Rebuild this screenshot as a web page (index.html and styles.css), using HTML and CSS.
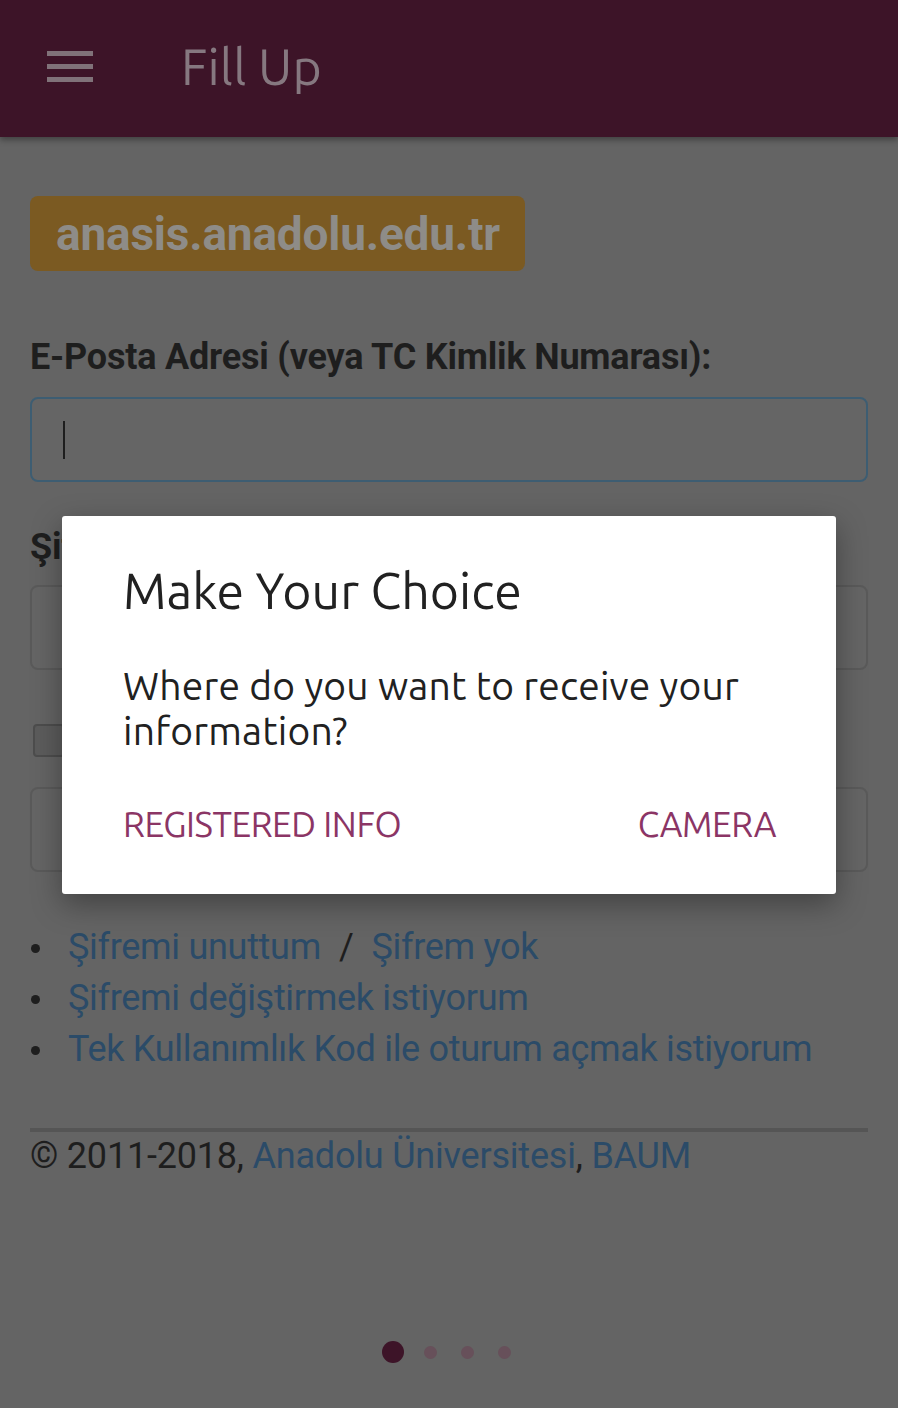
FILE: index.html
```html
<!DOCTYPE html>
<html lang="tr">
<head>
<meta charset="utf-8">
<title>Fill Up</title>
<link rel="stylesheet" href="styles.css">
</head>
<body>
<header class="appbar">
  <svg class="menu" width="46" height="32" viewBox="0 0 46 32"><rect x="0" y="0" width="46" height="5" fill="#807279"/><rect x="0" y="13" width="46" height="5" fill="#807279"/><rect x="0" y="26" width="46" height="5" fill="#807279"/></svg>
  <h1 class="title">Fill Up</h1>
</header>
<main class="page">
  <div class="badge">anasis.anadolu.edu.tr</div>
  <label class="label label-email">E-Posta Adresi (veya TC Kimlik Numarası):</label>
  <div class="input input-focus"><span class="caret"></span></div>
  <label class="label label-pass">Şifre:</label>
  <div class="input input-pass"></div>
  <div class="check-row"><span class="checkbox"></span></div>
  <div class="input input-third"></div>
  <ul class="links">
    <li><a>Şifremi unuttum</a><span class="sep">/</span><a>Şifrem yok</a></li>
    <li><a>Şifremi değiştirmek istiyorum</a></li>
    <li><a>Tek Kullanımlık Kod ile oturum açmak istiyorum</a></li>
  </ul>
  <hr class="rule">
  <p class="footer">© 2011-2018, <a>Anadolu Üniversitesi</a>, <a>BAUM</a></p>
  <div class="dots"><span class="dot active"></span><span class="dot"></span><span class="dot"></span><span class="dot"></span></div>
</main>
<div class="dialog">
  <h2 class="dialog-title">Make Your Choice</h2>
  <p class="dialog-text">Where do you want to receive your information?</p>
  <div class="dialog-actions">
    <button class="action">REGISTERED INFO</button>
    <button class="action">CAMERA</button>
  </div>
</div>
</body>
</html>
```
FILE: styles.css
```css
html, body {
  margin: 0;
  padding: 0;
}
body {
  width: 898px;
  height: 1408px;
  background: #646464;
  overflow: hidden;
  font-family: Roboto, "Liberation Sans", sans-serif;
}
.appbar {
  height: 137px;
  background: #3d1428;
  display: flex;
  align-items: center;
  box-shadow: 0 3px 6px rgba(0,0,0,0.35);
  position: relative;
  z-index: 1;
}
.menu {
  margin-left: 47px;
  margin-top: -4px;
}
.title {
  margin: -6px 0 0 88px;
  font-family: Ubuntu, "Open Sans", sans-serif;
  font-weight: 400;
  font-size: 50px;
  color: #867880;
  letter-spacing: 0.2px;
}
.page {
  padding: 59px 30px 0 30px;
  display: flex;
  flex-direction: column;
  align-items: flex-start;
}
.badge {
  height: 75px;
  width: 495px;
  box-sizing: border-box;
  background: #7b5a22;
  border-radius: 8px;
  color: #8e8c88;
  font-weight: 700;
  font-size: 46px;
  letter-spacing: -0.2px;
  display: flex;
  align-items: center;
  padding-left: 26px;
}
.label {
  font-weight: 700;
  font-size: 36px;
  color: #1e1e1e;
  letter-spacing: -0.2px;
  line-height: 40px;
}
.label-email {
  margin-top: 66px;
}
.label-pass {
  margin-top: 45px;
}
.input {
  width: 838px;
  height: 85px;
  box-sizing: border-box;
  border: 2px solid #5a5a5a;
  border-radius: 8px;
  background: #656565;
}
.input-focus {
  margin-top: 20px;
  border-color: #3d5d72;
  display: flex;
  align-items: center;
  padding-left: 31px;
}
.caret {
  width: 2px;
  height: 38px;
  background: #1e1e1e;
}
.input-pass {
  margin-top: 18px;
}
.check-row {
  margin-top: 54px;
  height: 34px;
  padding-left: 3px;
}
.checkbox {
  display: block;
  width: 32px;
  height: 33px;
  box-sizing: border-box;
  border: 2px solid #4d4d4d;
  border-radius: 4px;
  background: #5c5c5c;
}
.input-third {
  margin-top: 29px;
}
.links {
  margin: 50px 0 0 0;
  padding: 0;
  list-style: none;
  font-size: 36px;
  line-height: 51px;
  color: #1e1e1e;
  letter-spacing: -0.3px;
}
.links li {
  display: flex;
  align-items: center;
}
.links li::before {
  content: "";
  width: 9px;
  height: 9px;
  border-radius: 50%;
  background: #1e1e1e;
  margin: 2px 28px 0 1px;
}
.links a, .footer a {
  color: #2b4b68;
}
.sep {
  margin: 0 18px;
  color: #1e1e1e;
}
.rule {
  width: 838px;
  margin: 53px 0 0 0;
  border: 0;
  height: 4px;
  background: #555555;
}
.footer {
  margin: 2px 0 0 0;
  font-size: 36px;
  line-height: 44px;
  color: #1e1e1e;
  letter-spacing: -0.2px;
}
.dots {
  align-self: center;
  margin: 163px 6px 0 0;
  display: flex;
  align-items: center;
}
.dot {
  width: 13px;
  height: 13px;
  border-radius: 50%;
  background: #67505a;
  margin-left: 24px;
}
.dot.active {
  width: 22px;
  height: 22px;
  background: #3d1428;
  margin-left: 0;
  margin-right: -4px;
}
.dialog {
  position: absolute;
  left: 62px;
  top: 516px;
  width: 774px;
  height: 378px;
  box-sizing: border-box;
  background: #ffffff;
  border-radius: 3px;
  box-shadow: 0 10px 30px rgba(0,0,0,0.35);
  padding: 44px 60px 0 61px;
  font-family: Ubuntu, "Open Sans", sans-serif;
}
.dialog-title {
  margin: 0;
  font-weight: 400;
  font-size: 50px;
  line-height: 60px;
  color: #212121;
}
.dialog-text {
  margin: 43px 0 0 0;
  font-size: 39px;
  line-height: 45px;
  color: #212121;
  letter-spacing: 0.2px;
}
.dialog-actions {
  margin-top: 51px;
  display: flex;
  justify-content: space-between;
}
.action {
  border: 0;
  background: none;
  padding: 0;
  font-family: inherit;
  font-size: 35px;
  line-height: 40px;
  color: #8b3565;
  letter-spacing: -0.4px;
}
```
